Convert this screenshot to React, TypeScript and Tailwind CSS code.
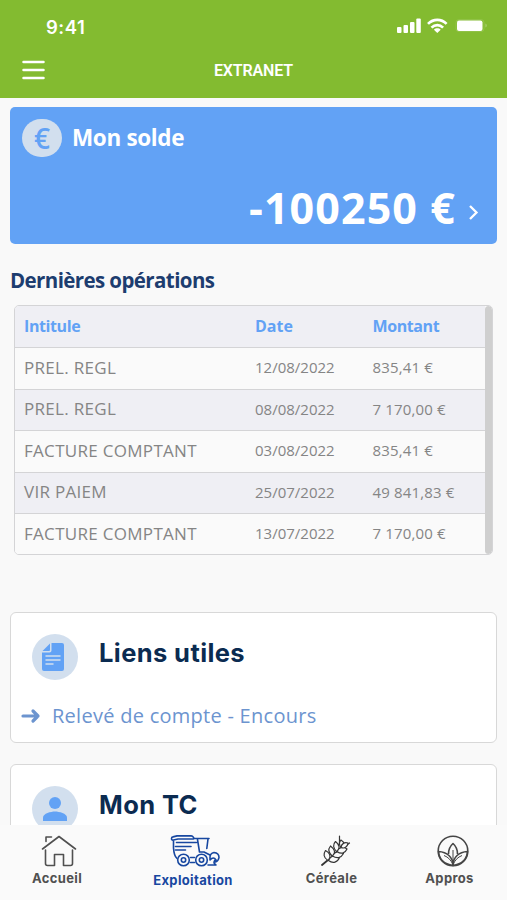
import type { ReactNode } from "react";

const operations = [
  { label: "PREL. REGL", date: "12/08/2022", amount: "835,41 €" },
  { label: "PREL. REGL", date: "08/08/2022", amount: "7 170,00 €" },
  { label: "FACTURE COMPTANT", date: "03/08/2022", amount: "835,41 €" },
  { label: "VIR PAIEM", date: "25/07/2022", amount: "49 841,83 €" },
  { label: "FACTURE COMPTANT", date: "13/07/2022", amount: "7 170,00 €" },
];

function StatusIcons() {
  return (
    <svg width="94" height="20" viewBox="0 0 94 20" fill="white">
      <rect x="0" y="11" width="4.500" height="6" rx="1" />
      <rect x="6.500" y="9" width="4.500" height="8" rx="1" />
      <rect x="13" y="6" width="4.500" height="11" rx="1" />
      <rect x="19.300" y="2.500" width="4.500" height="14.500" rx="1" />
      <g fill="none" stroke="white" strokeWidth="2.700">
        <path d="M31 7.900c5.400-5.300 13.200-5.300 18.600 0" />
        <path d="M34.500 11.600c3.400-3.400 8.200-3.400 11.600 0" />
      </g>
      <path d="m40.300 17-3.400-3.300c1.900-1.800 4.900-1.800 6.800 0Z" />
      <rect x="59" y="3.600" width="28" height="12" rx="3" fill="none" stroke="white" opacity=".12" />
      <rect x="60" y="4.500" width="25.500" height="10.500" rx="2" />
      <path d="M88.500 7.500c1.600.7 1.600 3.300 0 4Z" opacity=".35" />
    </svg>
  );
}

function Badge({ children }: { children: ReactNode }) {
  return (
    <div className="flex size-[46px] shrink-0 items-center justify-center rounded-full bg-[#d2dfee]">
      {children}
    </div>
  );
}

function DocumentIcon() {
  return (
    <svg width="22" height="28" viewBox="0 0 22 28" className="-ml-1">
      <path d="M9.500 0H20a2 2 0 0 1 2 2v24a2 2 0 0 1-2 2H2a2 2 0 0 1-2-2V9.500h7.500a2 2 0 0 0 2-2Z" fill="#62a2f5" />
      <path d="M8 .500v6.500a1 1 0 0 1-1 1H.500Z" fill="#62a2f5" />
      <path d="M4 13h14M4 17h14M4 21h7" stroke="#d2dfee" strokeWidth="1.500" strokeLinecap="round" />
    </svg>
  );
}

function PersonIcon() {
  return (
    <svg width="24" height="24" viewBox="0 0 24 24" fill="#62a2f5">
      <circle cx="12" cy="6" r="6" />
      <path d="M0 24v-3.500C0 16.500 8 14.500 12 14.500s12 2 12 6V24Z" />
    </svg>
  );
}

function HomeIcon() {
  return (
    <svg width="36" height="32" viewBox="0 0 36 32" className="ml-[3px]" fill="none" stroke="#505050" strokeWidth="1.600" strokeLinecap="round" strokeLinejoin="round">
      <path d="M1.500 14 18 1.500l16.500 12.500M5 6.500v-4.500h5.500M4.500 15v13.500q0 2 2 2h7v-11h9v11h7q2 0 2-2V15" />
    </svg>
  );
}

function HarvesterIcon() {
  return (
    <svg width="50" height="32" viewBox="0 0 50 32" className="ml-[3px]" fill="none" stroke="#1747a0" strokeWidth="1.600" strokeLinecap="round" strokeLinejoin="round">
      <path d="M1.500 3.500Q1.500 5.500 3.500 5L8 4h14q2.500 0 1.500-1.600T21 .900H7L3 1.900Q1.500 2.200 1.500 3.500Z" />
      <path d="M24 3.500h15M27.500 4.500 29.500 17h4.500l6 3M38 4l-1.200 9.500M3.500 6v7Q4 21 7 23.500M6.500 7.500h20M5.500 11.500h15.500M5.500 15h10M20.500 22.500h4" />
      <circle cx="13.500" cy="25" r="5.800" />
      <circle cx="13.500" cy="25" r="2.200" />
      <circle cx="31.500" cy="25" r="5.800" />
      <circle cx="31.500" cy="25" r="2.200" />
      <path d="M20.500 27.500h4M38 30h8M40 25v-3q0-3.500 4-4.500 5 .500 5 5-.500 3.500-3.500 4.500M40 25q3.500-4 6 0-2 0-2 3l2 2" />
    </svg>
  );
}

function WheatIcon() {
  return (
    <svg width="30" height="32" viewBox="0 0 30 32" className="ml-2" fill="none" stroke="#353535" strokeWidth="1.200" strokeLinecap="round" strokeLinejoin="round">
      <path d="M1 30 7 25" strokeWidth="1.800" />
      <path d="M7 25 28.500 8M18.500 1v7" />
      <g fill="#fafafa">
        <path d="M7 25.500C2 22.500 2.500 18.500 4.500 15.500 9 18 10 21 8 24.500Z" />
        <path d="M11.500 21.500C7 17.500 7.500 13.500 9.500 11c4 3 5.500 6.500 2.500 10.500Z" />
        <path d="M16 17C11.500 13 12 9 14.500 6.500c4 3 5 7 1.500 10.500Z" />
        <path d="M20.500 13c-3-3.500-2.500-6-.500-8 4 2.500 4 5.500.500 8Z" />
        <path d="M7.500 25.500c2-5 6.500-6 11-3-2 5-6.500 6.500-11 3Z" />
        <path d="M11.500 21c2.500-5 7.500-6 11-2.500-2.500 4.500-6.500 5.500-11 2.500Z" />
        <path d="M16 16.500c2-4.500 6.500-5.500 10-2.500-2 4.500-6 5.500-10 2.500Z" />
        <path d="M20 12.500c.500-4 3.500-5.500 7-4.500-.500 4-3.500 6-7 4.500Z" />
      </g>
    </svg>
  );
}

function LeavesIcon() {
  return (
    <svg width="32" height="32" viewBox="0 0 32 32" className="ml-[6px]" fill="none" stroke="#454545" strokeWidth="1.600" strokeLinejoin="round">
      <circle cx="16" cy="16" r="14.800" />
      <path d="M11.500 19q0-6.500 4.500-10.500 4.500 4 4.500 10.500" />
      <path d="M16 30.500C16 22 10 17 1.500 16.500 2 24 7 29 16 30.500ZM16 30.500C16 22 22 17 30.500 16.500 30 24 25 29 16 30.500Z" />
      <path d="M16 15v15M7 20.500q6.500 2.500 9 9.500M25 20.500q-6.500 2.500-9 9.500" strokeWidth="1" />
    </svg>
  );
}

function Header() {
  return (
    <header className="h-[98px] bg-[#83bb30] text-white">
      <div className="flex h-[50px] items-start justify-between pt-4 pr-4 pl-[46px]">
        <span className="font-['Inter'] text-[18.5px] leading-[22px] font-semibold tracking-[0.5px]">9:41</span>
        <StatusIcons />
      </div>
      <div className="grid h-10 grid-cols-3 items-center px-[22px]">
        <svg width="23" height="20" viewBox="0 0 23 20" stroke="white" strokeWidth="2.500" strokeLinecap="round">
          <path d="M1.500 2h20M1.500 10h20M1.500 18h20" />
        </svg>
        <h1 className="pt-[2px] text-center font-['Roboto'] text-[16px] font-semibold tracking-[-0.15px]">EXTRANET</h1>
      </div>
    </header>
  );
}

function BalanceCard() {
  return (
    <section className="flex h-[137px] flex-col rounded-[5px] bg-[#62a2f5] text-white">
      <div className="flex items-center gap-[10px] pt-3 pl-3">
        <div className="flex h-[38px] w-10 items-center justify-center rounded-full bg-[#d2dfee] font-['Open_Sans'] text-[28px] font-semibold text-[#62a2f5]">
          €
        </div>
        <h2 className="pb-px text-[22.5px] leading-[37px] font-bold tracking-[-0.35px]">Mon solde</h2>
      </div>
      <div className="flex items-center justify-end pt-[21px] pr-[17px]">
        <span className="text-[43px] leading-[60px] font-bold tracking-[1.1px]">-100250 €</span>
        <svg width="12" height="18" viewBox="0 0 12 18" className="mt-2 ml-3" fill="none" stroke="white" strokeWidth="2.300">
          <path d="m2 3 6.500 6.500L2 16" />
        </svg>
      </div>
    </section>
  );
}

function OperationsTable() {
  return (
    <div className="mt-[11px] mr-1 ml-1 flex h-[250px] overflow-hidden rounded-[5px] border-[1.5px] border-[#d4d4d6]">
      <div className="flex-1">
        <div className="grid h-[41px] grid-cols-[231px_117.5px_1fr] items-center bg-[#efeff4] pb-px pl-[9px] text-[16px] font-bold tracking-[-0.4px] text-[#62a2f5]">
          <span>Intitule</span>
          <span className="tracking-normal">Date</span>
          <span>Montant</span>
        </div>
        {operations.map((op, i) => (
          <div
            key={i}
            className="grid h-[41.5px] grid-cols-[231px_117.5px_1fr] items-center border-t-[1.5px] border-[#d4d4d6] pb-[2px] pl-[9px] text-[15px] text-[#858585] odd:bg-[#efeff4] even:bg-[#fafafa]"
          >
            <span className="text-[17px] tracking-[0.3px]">{op.label}</span>
            <span>{op.date}</span>
            <span className="tracking-[0.15px]">{op.amount}</span>
          </div>
        ))}
      </div>
      <div className="w-[7px] rounded-[4px] bg-[#cfcfcf]" />
    </div>
  );
}

function CardTitle({ children }: { children: ReactNode }) {
  return (
    <h2 className="mb-2 ml-[21px] font-['Inter'] text-[25.5px] leading-[34px] font-bold tracking-[0.4px] text-[#0b2b51]">
      {children}
    </h2>
  );
}

function NavItem({ label, active, children }: { label: string; active?: boolean; children: ReactNode }) {
  return (
    <a
      href="#"
      className={`flex flex-col items-center pt-[10px] font-['Inter'] text-[13px] font-bold tracking-[0.35px] ${active ? "text-[#1747a0]" : "text-[#505050]"}`}
    >
      {children}
      <span className={active ? "mt-1" : "mt-[2px]"}>{label}</span>
    </a>
  );
}

export default function App() {
  return (
    <div className="flex h-[900px] w-[507px] flex-col overflow-hidden bg-[#f9f9f9] font-['Open_Sans',sans-serif]">
      <Header />
      <main className="flex min-h-0 flex-1 flex-col overflow-hidden px-[10px] pt-[9px]">
        <div className="shrink-0">
          <BalanceCard />
          <h2 className="mt-[22px] text-[20.5px] leading-[28px] font-bold tracking-[-0.6px] text-[#1d3d6f]">
            Dernières opérations
          </h2>
          <OperationsTable />
        </div>
        <section className="mt-[57px] h-[131px] shrink-0 rounded-[6px] border-[1.5px] border-[#d8d8d8] bg-white">
          <div className="flex items-center pt-[21px] pl-[21px]">
            <Badge>
              <DocumentIcon />
            </Badge>
            <CardTitle>Liens utiles</CardTitle>
          </div>
          <a href="#" className="mt-[22px] flex items-center text-[20px] leading-[28px] tracking-[0.27px] text-[#6c94cf]">
            <svg width="20" height="16" viewBox="0 0 20 16" className="mr-[11px] ml-[10px]" fill="none" stroke="#6c94cf" strokeWidth="3.200" strokeLinecap="round" strokeLinejoin="round">
              <path d="M2 8h15M12 3l5 5-5 5" />
            </svg>
            <span>Relevé de compte - Encours</span>
          </a>
        </section>
        <section className="mt-[21px] h-[130px] shrink-0 rounded-[6px] border-[1.5px] border-[#d8d8d8] bg-white">
          <div className="flex items-center pt-[21px] pl-[21px]">
            <Badge>
              <PersonIcon />
            </Badge>
            <CardTitle>Mon TC</CardTitle>
          </div>
        </section>
      </main>
      <nav className="grid h-[75px] shrink-0 grid-cols-[114px_158px_119px_117px] bg-[#fafafa]">
        <NavItem label="Accueil">
          <HomeIcon />
        </NavItem>
        <NavItem label="Exploitation" active>
          <HarvesterIcon />
        </NavItem>
        <NavItem label="Céréale">
          <WheatIcon />
        </NavItem>
        <NavItem label="Appros">
          <LeavesIcon />
        </NavItem>
      </nav>
    </div>
  );
}
